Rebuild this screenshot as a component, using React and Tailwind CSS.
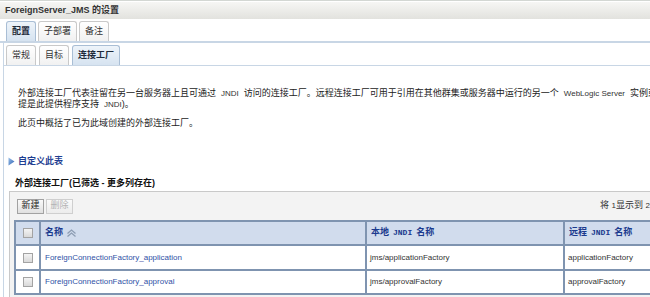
const latin = "font-['Liberation_Sans','Noto_Sans_CJK_SC',sans-serif]";

function Tab({ label, active }) {
  return (
    <div
      className={`flex h-full items-center rounded-t-[3px] border border-b-0 px-[5px] text-[9px] leading-none ${
        active
          ? 'border-[#a9bed5] bg-gradient-to-b from-[#eef4fa] to-[#d6e3f0] font-bold text-[#1e2a3a]'
          : 'border-[#c9c9c9] bg-gradient-to-b from-white to-[#f1f1f1] text-[#333]'
      }`}
    >
      {label}
    </div>
  );
}

function Checkbox() {
  return <div className="h-[10px] w-[10px] border border-[#a3a3a3] bg-gradient-to-b from-[#f4f4f4] to-[#d9d9d9]" />;
}

function SortIcon() {
  return (
    <svg width="11" height="8" viewBox="0 0 11 8" className="ml-[3px]">
      <path d="M1.5 4.5 L5.5 1 L9.5 4.5" fill="none" stroke="#8d9db3" strokeWidth="1.3" />
      <path d="M1.5 7.5 L5.5 4 L9.5 7.5" fill="none" stroke="#8d9db3" strokeWidth="1.3" />
    </svg>
  );
}

// header variant: monospace bold, as in the column titles
function Jndi() {
  return <span className="mx-[4px] font-['Liberation_Mono',monospace] text-[8px] font-bold">JNDI</span>;
}

const rows = [
  ['ForeignConnectionFactory_application', 'jms/applicationFactory', 'applicationFactory'],
  ['ForeignConnectionFactory_approval', 'jms/approvalFactory', 'approvalFactory'],
];

export default function App() {
  return (
    <div className={`h-[297px] w-[650px] overflow-hidden bg-white ${latin}`}>
      <div className="w-[760px]">
        {/* title bar */}
        <div className="h-[2px] border-t border-[#d3d7d3]" />
        <div className="flex h-[17px] items-center bg-gradient-to-b from-[#f6f6f4] to-[#e2e2de] pl-[5px] text-[9px] font-bold text-[#333]">
          ForeignServer_JMS 的设置
        </div>

        {/* top tabs */}
        <div className="mt-[2px] flex h-[20px] gap-[2px] pl-[6px]">
          <Tab label="配置" active />
          <Tab label="子部署" />
          <Tab label="备注" />
        </div>
        <div className="h-[2px] bg-[#c8d6e5]" />

        <div className="ml-[3px] border-l border-[#c8d6e5]">
          {/* sub tabs */}
          <div className="flex h-[22px] gap-[3px] pl-[2px] pt-[2px]">
            <Tab label="常规" />
            <Tab label="目标" />
            <Tab label="连接工厂" active />
          </div>
          <div className="h-[1px] bg-[#c8d6e5]" />

          <div className="pl-[14px] pt-[22px] text-[9px] leading-[11px] text-[#222]">
            <p className="whitespace-nowrap">
              外部连接工厂代表驻留在另一台服务器上且可通过<span className="mx-[5px] text-[8px] text-[#333]">JNDI</span>访问的连接工厂。远程连接工厂可用于引用在其他群集或服务器中运行的另一个
              <span className="mx-[5px] text-[8px] text-[#333]">WebLogic Server</span>实例或第三方 JMS 提供程序中的连接工厂(前
              <br />
              提是此提供程序支持<span className="ml-[5px] text-[8px] text-[#333]">JNDI</span>)。
            </p>
            <p className="mt-[8px] whitespace-nowrap">此页中概括了已为此域创建的外部连接工厂。</p>
          </div>

          <div className="mt-[27px] flex items-center pl-[4px] text-[9px] font-bold leading-[11px] text-[#1f3f92]">
            <svg width="7" height="9" viewBox="0 0 7 9" className="mr-[3px]">
              <defs>
                <linearGradient id="tri" x1="0" y1="0" x2="1" y2="1">
                  <stop offset="0" stopColor="#9cc0e8" />
                  <stop offset="1" stopColor="#2d63b5" />
                </linearGradient>
              </defs>
              <path d="M0.5 0.5 L6.5 4.5 L0.5 8.5 Z" fill="url(#tri)" />
            </svg>
            自定义此表
          </div>

          <div className="mt-[11px] pl-[11px] text-[9px] font-bold leading-[11px] text-[#111]">
            外部连接工厂(已筛选 - 更多列存在)
          </div>

          {/* table box */}
          <div className="ml-[5px] mt-[2px] border border-[#c9c9c9] bg-[#f3f3f3] pb-[4px]">
            <div className="flex h-[28px] items-center pl-[7px] text-[9px]">
              <button className="flex h-[15px] w-[27px] items-center justify-center border border-[#a2a2a2] bg-gradient-to-b from-[#fafafa] to-[#e0e0e0] text-[#222]">
                新建
              </button>
              <button className="ml-[2px] flex h-[15px] w-[27px] items-center justify-center border border-[#cfcfcf] bg-gradient-to-b from-[#fafafa] to-[#ececec] text-[#b3b3b3]">
                删除
              </button>
              <span className="ml-[527px] whitespace-nowrap text-[#333]">
                将 <span className="text-[8px]">1</span>显示到 <span className="text-[8px]">2</span>, 共 <span className="text-[8px]">2</span> 个
              </span>
            </div>

            <div className="ml-[4px] grid grid-cols-[25px_326px_198px_180px] border-l-2 border-t-2 border-[#7f94b0] text-[8px]">
              <div className="flex h-[24px] items-center justify-center border-b-2 border-r-2 border-[#7f94b0] bg-[#d1dced]">
                <Checkbox />
              </div>
              <div className="flex h-[24px] items-center border-b-2 border-r-2 border-[#7f94b0] bg-[#d1dced] pl-[4px] text-[9px] font-bold text-[#1b3a8e]">
                名称
                <SortIcon />
              </div>
              <div className="flex h-[24px] items-center border-b-2 border-r-2 border-[#7f94b0] bg-[#d1dced] pl-[4px] text-[9px] font-bold text-[#1b3a8e]">
                本地<Jndi />名称
              </div>
              <div className="flex h-[24px] items-center border-b-2 border-r-2 border-[#7f94b0] bg-[#d1dced] pl-[4px] text-[9px] font-bold text-[#1b3a8e]">
                远程<Jndi />名称
              </div>

              {rows.map(([name, local, remote], i) => (
                <div key={name} className="contents">
                  <div className={`flex ${i === 0 ? 'h-[25px]' : 'h-[24px]'} items-center justify-center border-b-2 border-r-2 border-[#7f94b0] bg-white`}>
                    <Checkbox />
                  </div>
                  <div className="flex items-center border-b-2 border-r-2 border-[#7f94b0] bg-white pl-[4px] text-[#3051a6]">
                    {name}
                  </div>
                  <div className="flex items-center border-b-2 border-r-2 border-[#7f94b0] bg-white pl-[3px] text-[#333]">
                    {local}
                  </div>
                  <div className="flex items-center border-b-2 border-r-2 border-[#7f94b0] bg-white pl-[3px] text-[#333]">
                    {remote}
                  </div>
                </div>
              ))}
            </div>
          </div>
        </div>
      </div>
    </div>
  );
}
